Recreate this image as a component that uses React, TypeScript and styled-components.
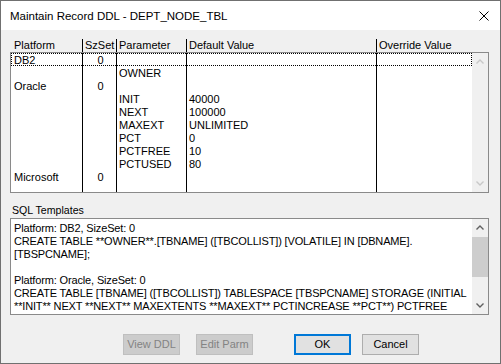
import React from "react";
import styled, { createGlobalStyle, css } from "styled-components";

const Global = createGlobalStyle`
  html, body { margin: 0; padding: 0; background: #f0f0f0; }
  * { box-sizing: border-box; }
  body { font-family: "Liberation Sans", Arial, sans-serif; font-size: 11px; color: #000; }
`;

const Window = styled.div`
  width: 501px;
  height: 364px;
  border: 1px solid #707070;
  background: #f0f0f0;
  display: flex;
  flex-direction: column;
  overflow: hidden;
`;

const TitleBar = styled.div`
  height: 29px;
  flex: none;
  background: #fff;
  display: flex;
  align-items: center;
  justify-content: space-between;
  padding: 0 11px 0 9px;
`;

const Title = styled.div`
  font-family: "Liberation Sans", Arial, sans-serif;
  font-size: 11.5px;
  color: #000;
`;

const CloseBtn = styled.div`
  width: 10px;
  height: 10px;
  display: flex;
  margin-top: 1px;
`;

const Content = styled.div`
  flex: 1;
  display: flex;
  flex-direction: column;
  padding: 9px 0 8px 9px;
`;

const COLS = "71px 34px 70px 190px 1fr";

const HeaderRow = styled.div`
  display: grid;
  grid-template-columns: ${COLS};
  width: 462px;
  height: 13px;
  padding-left: 1px;
  line-height: 13px;
`;

const HeadCell = styled.div<{ $first?: boolean }>`
  padding-left: ${(p) => (p.$first ? "3px" : "2px")};
  border-left: ${(p) => (p.$first ? "none" : "1px solid #000")};
  white-space: nowrap;
`;

const ListBox = styled.div`
  width: 479px;
  height: 141px;
  border: 1px solid #8a8a8a;
  background: #fff;
  display: flex;
`;

const ListBody = styled.div`
  width: 461px;
  display: flex;
  flex-direction: column;
`;

const Row = styled.div<{ $focus?: boolean; $fill?: boolean }>`
  display: grid;
  grid-template-columns: ${COLS};
  height: ${(p) => (p.$fill ? "auto" : "13px")};
  flex: ${(p) => (p.$fill ? "1" : "none")};
  line-height: 13px;
  ${(p) =>
    p.$focus &&
    css`
      outline: 1px dotted #000;
      outline-offset: -1px;
    `}
`;

const Cell = styled.div<{ $first?: boolean; $center?: boolean }>`
  padding-left: ${(p) => (p.$first ? "3px" : "2px")};
  padding-top: 1px;
  border-left: ${(p) => (p.$first ? "none" : "1px solid #000")};
  text-align: ${(p) => (p.$center ? "center" : "left")};
  white-space: nowrap;
  line-height: 12px;
`;

const ScrollBar = styled.div`
  width: 16px;
  flex: none;
  background: #f0f0f0;
  display: flex;
  flex-direction: column;
  justify-content: space-between;
`;

const ArrowBox = styled.div`
  height: 17px;
  display: flex;
  align-items: center;
  justify-content: center;
  flex: none;
`;

const Track = styled.div`
  flex: 1;
  display: flex;
  flex-direction: column;
`;

const Thumb = styled.div`
  height: 40px;
  margin-top: 1px;
  background: #cdcdcd;
`;

const Label = styled.div`
  margin-top: 10px;
  height: 14px;
  line-height: 14px;
  padding-left: 2px;
  font-size: 10.6px;
  margin-bottom: 1px;
`;

const TextBox = styled.div`
  width: 479px;
  height: 97px;
  border: 1px solid #8a8a8a;
  background: #fff;
  display: flex;
`;

const TextBody = styled.div`
  width: 461px;
  padding: 3px 0 0 3px;
  line-height: 13px;
`;

const TextLine = styled.div`
  height: 13px;
  white-space: pre;
  letter-spacing: -0.15px;
`;

const ButtonBar = styled.div`
  margin-top: 19px;
  display: flex;
  padding-left: 113px;
  gap: 41px;
`;

const ButtonGroup = styled.div<{ $gap: number }>`
  display: flex;
  flex: none;
  gap: ${(p) => p.$gap}px;
`;

const Button = styled.div<{ $variant?: "disabled" | "default" | "normal" }>`
  width: 57px;
  height: 21px;
  flex: none;
  display: flex;
  align-items: center;
  justify-content: center;
  font-size: 11px;
  line-height: 13px;
  white-space: nowrap;
  ${(p) =>
    p.$variant === "disabled"
      ? css`
          background: #cccccc;
          border: 1px solid #bfbfbf;
          color: #838383;
        `
      : p.$variant === "default"
      ? css`
          background: #e1e1e1;
          border: 2px solid #0078d7;
          color: #000;
        `
      : css`
          background: #e1e1e1;
          border: 1px solid #adadad;
          color: #000;
        `}
`;

const Chevron = ({ up, color }: { up?: boolean; color: string }) => (
  <svg width="8" height="5" viewBox="0 0 8 5">
    <polyline
      points={up ? "0.5,4.5 4,1 7.5,4.5" : "0.5,0.5 4,4 7.5,0.5"}
      fill="none"
      stroke={color}
      strokeWidth="1.4"
    />
  </svg>
);

type R = { p?: string; s?: string; param?: string; def?: string };
const rows: R[] = [
  { p: "DB2", s: "0" },
  { param: "OWNER" },
  { p: "Oracle", s: "0" },
  { param: "INIT", def: "40000" },
  { param: "NEXT", def: "100000" },
  { param: "MAXEXT", def: "UNLIMITED" },
  { param: "PCT", def: "0" },
  { param: "PCTFREE", def: "10" },
  { param: "PCTUSED", def: "80" },
  { p: "Microsoft", s: "0" },
];

const sqlLines = [
  "Platform: DB2, SizeSet: 0",
  "CREATE TABLE **OWNER**.[TBNAME] ([TBCOLLIST]) [VOLATILE] IN [DBNAME].",
  "[TBSPCNAME];",
  "",
  "Platform: Oracle, SizeSet: 0",
  "CREATE TABLE [TBNAME] ([TBCOLLIST]) TABLESPACE [TBSPCNAME] STORAGE (INITIAL",
  "**INIT** NEXT **NEXT** MAXEXTENTS **MAXEXT** PCTINCREASE **PCT**) PCTFREE",
];

export default function App() {
  return (
    <>
      <Global />
      <Window>
        <TitleBar>
          <Title>Maintain Record DDL - DEPT_NODE_TBL</Title>
          <CloseBtn>
            <svg width="10" height="10" viewBox="0 0 10 10">
              <path d="M0.5 0.5 L9.5 9.5 M9.5 0.5 L0.5 9.5" stroke="#000" strokeWidth="1" />
            </svg>
          </CloseBtn>
        </TitleBar>
        <Content>
          <HeaderRow>
            <HeadCell $first>Platform</HeadCell>
            <HeadCell>SzSet</HeadCell>
            <HeadCell>Parameter</HeadCell>
            <HeadCell>Default Value</HeadCell>
            <HeadCell>Override Value</HeadCell>
          </HeaderRow>
          <ListBox>
            <ListBody>
              {rows.map((r, i) => (
                <Row key={i} $focus={i === 0}>
                  <Cell $first>{r.p}</Cell>
                  <Cell $center>{r.s}</Cell>
                  <Cell>{r.param}</Cell>
                  <Cell>{r.def}</Cell>
                  <Cell></Cell>
                </Row>
              ))}
              <Row $fill>
                <Cell $first />
                <Cell />
                <Cell />
                <Cell />
                <Cell />
              </Row>
            </ListBody>
            <ScrollBar>
              <ArrowBox>
                <Chevron up color="#c8c8c8" />
              </ArrowBox>
              <ArrowBox>
                <Chevron color="#c8c8c8" />
              </ArrowBox>
            </ScrollBar>
          </ListBox>
          <Label>SQL Templates</Label>
          <TextBox>
            <TextBody>
              {sqlLines.map((l, i) => (
                <TextLine key={i}>{l}</TextLine>
              ))}
            </TextBody>
            <ScrollBar>
              <ArrowBox>
                <Chevron up color="#606060" />
              </ArrowBox>
              <Track>
                <Thumb />
              </Track>
              <ArrowBox>
                <Chevron color="#606060" />
              </ArrowBox>
            </ScrollBar>
          </TextBox>
          <ButtonBar>
            <ButtonGroup $gap={16}>
              <Button $variant="disabled">View DDL</Button>
              <Button $variant="disabled">Edit Parm</Button>
            </ButtonGroup>
            <ButtonGroup $gap={11}>
              <Button $variant="default">OK</Button>
              <Button $variant="normal">Cancel</Button>
            </ButtonGroup>
          </ButtonBar>
        </Content>
      </Window>
    </>
  );
}
